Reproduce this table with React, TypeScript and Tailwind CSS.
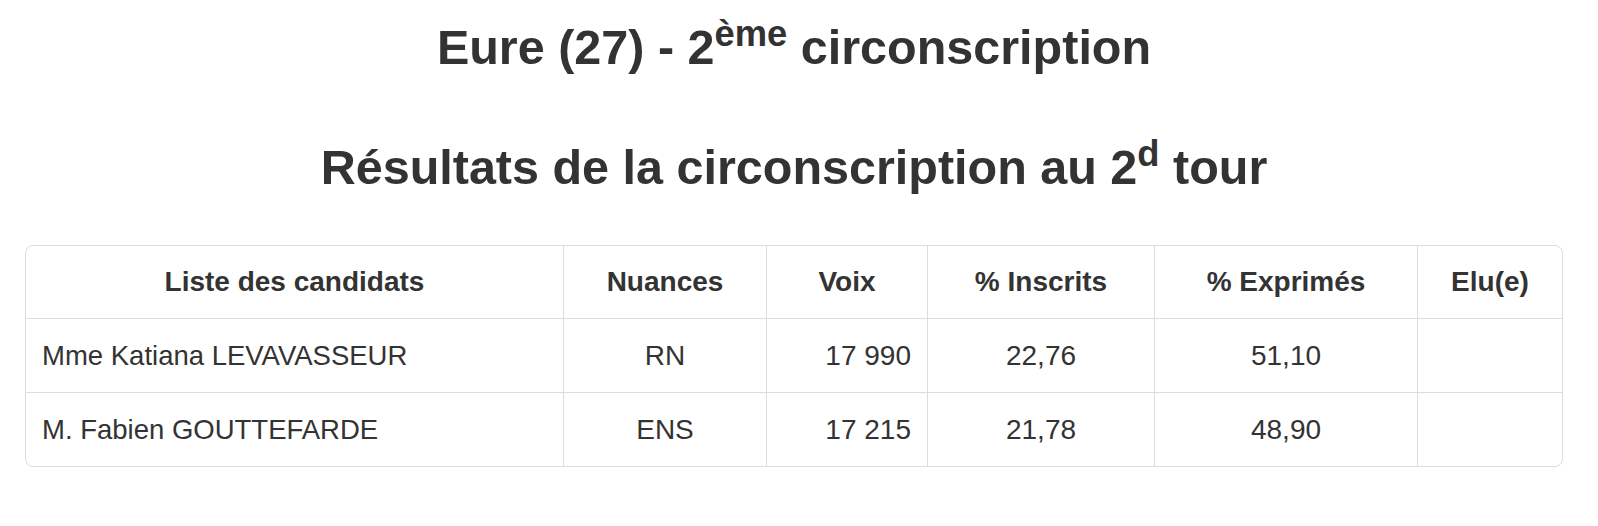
import React from "react";

const rows = [
  { name: "Mme Katiana LEVAVASSEUR", nuance: "RN", voix: "17 990", inscrits: "22,76", exprimes: "51,10", elu: "" },
  { name: "M. Fabien GOUTTEFARDE", nuance: "ENS", voix: "17 215", inscrits: "21,78", exprimes: "48,90", elu: "" },
];

export default function App() {
  return (
    <div
      className="w-[1588px] bg-white px-[25px] pt-[20px] text-[#333]"
      style={{ fontFamily: '"Liberation Sans", Arial, Helvetica, sans-serif' }}
    >
      <h1 className="text-center text-[48.5px] font-bold leading-[55px]">
        Eure (27) - 2<sup>ème</sup> circonscription
      </h1>
      <h2 className="mt-[65px] text-center text-[48.5px] font-bold leading-[55px]">
        Résultats de la circonscription au 2<sup>d</sup> tour
      </h2>
      <div className="mt-[50px] overflow-hidden rounded-[8px] border border-[#dddddd]">
        <div className="grid grid-cols-[537px_203px_161px_227px_263px_145px] text-[28px] leading-[40px]">
          <div className="flex h-[72px] items-center justify-center px-[16px] font-bold">Liste des candidats</div>
          <div className="flex h-[72px] items-center justify-center border-l border-[#dddddd] px-[16px] font-bold">Nuances</div>
          <div className="flex h-[72px] items-center justify-center border-l border-[#dddddd] px-[16px] font-bold">Voix</div>
          <div className="flex h-[72px] items-center justify-center border-l border-[#dddddd] px-[16px] font-bold">% Inscrits</div>
          <div className="flex h-[72px] items-center justify-center border-l border-[#dddddd] px-[16px] font-bold">% Exprimés</div>
          <div className="flex h-[72px] items-center justify-center border-l border-[#dddddd] px-[16px] font-bold">Elu(e)</div>
          {rows.map((r) => (
            <React.Fragment key={r.name}>
              <div className="flex h-[74px] items-center border-t border-[#dddddd] px-[16px] text-[27.5px]">{r.name}</div>
              <div className="flex h-[74px] items-center justify-center border-l border-t border-[#dddddd] px-[16px]">{r.nuance}</div>
              <div className="flex h-[74px] items-center justify-end border-l border-t border-[#dddddd] px-[16px]">{r.voix}</div>
              <div className="flex h-[74px] items-center justify-center border-l border-t border-[#dddddd] px-[16px]">{r.inscrits}</div>
              <div className="flex h-[74px] items-center justify-center border-l border-t border-[#dddddd] px-[16px]">{r.exprimes}</div>
              <div className="flex h-[74px] items-center justify-center border-l border-t border-[#dddddd] px-[16px]">{r.elu}</div>
            </React.Fragment>
          ))}
        </div>
      </div>
    </div>
  );
}
